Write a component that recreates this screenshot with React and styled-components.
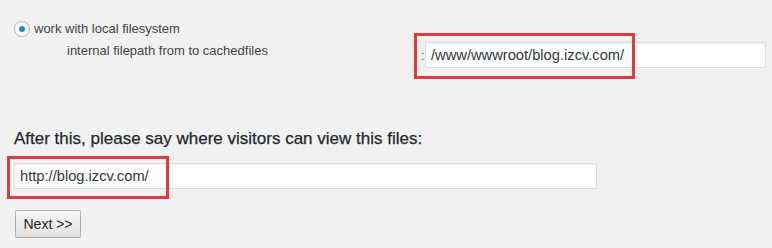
import styled, { createGlobalStyle } from 'styled-components';

const GlobalStyle = createGlobalStyle`
  html, body {
    margin: 0;
    padding: 0;
    background: #f1f1f1;
  }
  body {
    font-family: "Liberation Sans", Arial, sans-serif;
    color: #444;
    font-size: 13px;
  }
`;

const Page = styled.div`
  width: 772px;
  height: 248px;
  padding: 20px 0 0 14px;
  box-sizing: border-box;
  overflow: hidden;
`;

const RadioLine = styled.label`
  display: flex;
  align-items: center;
  gap: 4px;
  height: 17px;
  line-height: 17px;
`;

const Radio = styled.span`
  width: 16px;
  height: 16px;
  box-sizing: border-box;
  border-radius: 50%;
  border: 1px solid #b4b9be;
  background: #fff;
  box-shadow: inset 0 1px 2px rgba(0, 0, 0, 0.07);
  display: flex;
  align-items: center;
  justify-content: center;

  &::after {
    content: '';
    width: 6px;
    height: 6px;
    border-radius: 50%;
    background: #1e8cbe;
  }
`;

const PathRow = styled.div`
  display: grid;
  grid-template-columns: 354px 4px 341px;
  margin: 5px 0 0 53px;
  align-items: start;
`;

const PathLabel = styled.span`
  line-height: 18px;
`;

const Colon = styled.span`
  line-height: 26px;
  margin-top: 1px;
  font-size: 12px;
`;

const Anchor = styled.div`
  position: relative;
`;

const Highlight = styled.div`
  position: absolute;
  left: ${p => p.$left}px;
  top: ${p => p.$top}px;
  width: ${p => p.$width}px;
  height: ${p => p.$height}px;
  border: 3px solid #e0393e;
  box-sizing: border-box;
  pointer-events: none;
`;

const TextInput = styled.input`
  display: block;
  width: ${p => p.$width}px;
  height: 26px;
  box-sizing: border-box;
  border: 1px solid #ddd;
  box-shadow: inset 0 1px 2px rgba(0, 0, 0, 0.07);
  background: #fff;
  color: #32373c;
  padding: 0 5px;
  font-family: inherit;
  font-size: 14.7px;
  outline: none;
`;

const Heading = styled.h3`
  margin: 59px 0 0;
  font-size: 17px;
  font-weight: 400;
  -webkit-text-stroke: 0.25px #23282d;
  color: #23282d;
  line-height: 22px;
`;

const UrlBlock = styled.div`
  margin-top: 13px;
`;

const Button = styled.button`
  margin: 21px 0 0 1px;
  width: 66px;
  height: 28px;
  border: 1px solid #adadad;
  border-radius: 2px;
  background: linear-gradient(#f6f6f6, #e2e2e2);
  font-family: inherit;
  font-size: 14px;
  color: #222;
  padding: 0;
`;

export default function App() {
  return (
    <>
      <GlobalStyle />
      <Page>
        <RadioLine>
          <Radio />
          work with local filesystem
        </RadioLine>
        <PathRow>
          <PathLabel>internal filepath from to cachedfiles</PathLabel>
          <Colon>:</Colon>
          <Anchor>
            <TextInput $width={341} defaultValue="/www/wwwroot/blog.izcv.com/" />
            <Highlight $left={-11} $top={-9} $width={221} $height={46} />
          </Anchor>
        </PathRow>
        <Heading>After this, please say where visitors can view this files:</Heading>
        <UrlBlock>
          <Anchor>
            <TextInput $width={583} defaultValue="http://blog.izcv.com/" />
            <Highlight $left={-7} $top={-7} $width={162} $height={43} />
          </Anchor>
        </UrlBlock>
        <Button>Next &gt;&gt;</Button>
      </Page>
    </>
  );
}
